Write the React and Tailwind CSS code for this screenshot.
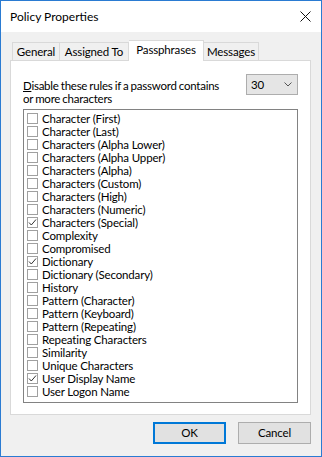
import React from "react";

const items = [
  ["Character (First)", false],
  ["Character (Last)", false],
  ["Characters (Alpha Lower)", false],
  ["Characters (Alpha Upper)", false],
  ["Characters (Alpha)", false],
  ["Characters (Custom)", false],
  ["Characters (High)", false],
  ["Characters (Numeric)", false],
  ["Characters (Special)", true],
  ["Complexity", false],
  ["Compromised", false],
  ["Dictionary", true],
  ["Dictionary (Secondary)", false],
  ["History", false],
  ["Pattern (Character)", false],
  ["Pattern (Keyboard)", false],
  ["Pattern (Repeating)", false],
  ["Repeating Characters", false],
  ["Similarity", false],
  ["Unique Characters", false],
  ["User Display Name", true],
  ["User Logon Name", false],
];

function Box({ checked }) {
  return (
    <div className="w-[11px] h-[11px] border border-[#a0a0a0] bg-white flex items-center justify-center shrink-0">
      {checked && (
        <svg width="9" height="9" viewBox="0 0 9 9">
          <path d="M1 4.5 L3.3 7 L8 1.5" fill="none" stroke="#333" strokeWidth="1" />
        </svg>
      )}
    </div>
  );
}

export default function App() {
  return (
    <div
      className="w-[322px] h-[457px] border border-[#2a7bd2] flex flex-col bg-[#f0f0f0] text-[11.5px] tracking-[-0.15px] text-black overflow-hidden"
      style={{ fontFamily: "Lato, 'Liberation Sans', sans-serif" }}
    >
      <div className="h-[31px] bg-white flex items-center justify-between pl-[9px] pr-[10px] shrink-0">
        <span className="text-[12px] tracking-normal">Policy Properties</span>
        <svg width="11" height="11" viewBox="0 0 11 11">
          <path d="M0.5 0.5 L10.5 10.5 M10.5 0.5 L0.5 10.5" stroke="#111" strokeWidth="1" />
        </svg>
      </div>
      <div className="flex flex-col pl-[9px] pt-[8px]">
        <div className="h-[20px] flex items-end ml-[2px]">
          <div className="h-[18px] w-[48px] border border-b-0 border-[#d9d9d9] flex items-center justify-center leading-none pt-[1px]">General</div>
          <div className="h-[18px] w-[69px] border border-b-0 border-l-0 border-[#d9d9d9] flex items-center justify-center leading-none pt-[1px]">Assigned To</div>
          <div className="h-[21px] w-[75px] border border-b-0 border-l-0 border-[#d9d9d9] bg-white -mb-px relative z-10 flex items-center justify-center leading-none pb-[2px]">Passphrases</div>
          <div className="h-[18px] w-[55px] border border-b-0 border-l-0 border-[#d9d9d9] flex items-center justify-center leading-none pt-[1px]">Messages</div>
        </div>
        <div className="w-[301px] h-[355px] border border-[#d9d9d9] bg-white px-[12px] pt-[13px]">
          <div className="flex justify-between items-start">
            <div className="mt-[5px] leading-[13px] tracking-[-0.25px] [word-spacing:-0.5px]">
              <span className="underline">D</span>isable these rules if a password contains
              <br />
              or more characters
            </div>
            <div className="w-[52px] h-[21px] border border-[#adadad] bg-[#e5e5e5] flex items-center justify-between pl-[4px] pr-[5px]">
              <span>30</span>
              <svg width="8" height="5" viewBox="0 0 8 5">
                <path d="M0.5 0.5 L4 4 L7.5 0.5" fill="none" stroke="#555" strokeWidth="1" />
              </svg>
            </div>
          </div>
          <div className="mt-[4px] h-[294px] border border-[#828282] pt-[2px] pl-[3px]">
            {items.map(([label, checked]) => (
              <div key={label} className="h-[13px] flex items-center gap-[4px] whitespace-nowrap">
                <Box checked={checked} />
                <span className="leading-[13px]">{label}</span>
              </div>
            ))}
          </div>
        </div>
        <div className="flex justify-end gap-[12px] pr-[10px] mt-[7px]">
          <div className="w-[73px] h-[22px] bg-[#e1e1e1] border-2 border-[#0078d7] flex items-center justify-center">OK</div>
          <div className="w-[73px] h-[22px] bg-[#e1e1e1] border border-[#adadad] flex items-center justify-center">Cancel</div>
        </div>
      </div>
    </div>
  );
}
